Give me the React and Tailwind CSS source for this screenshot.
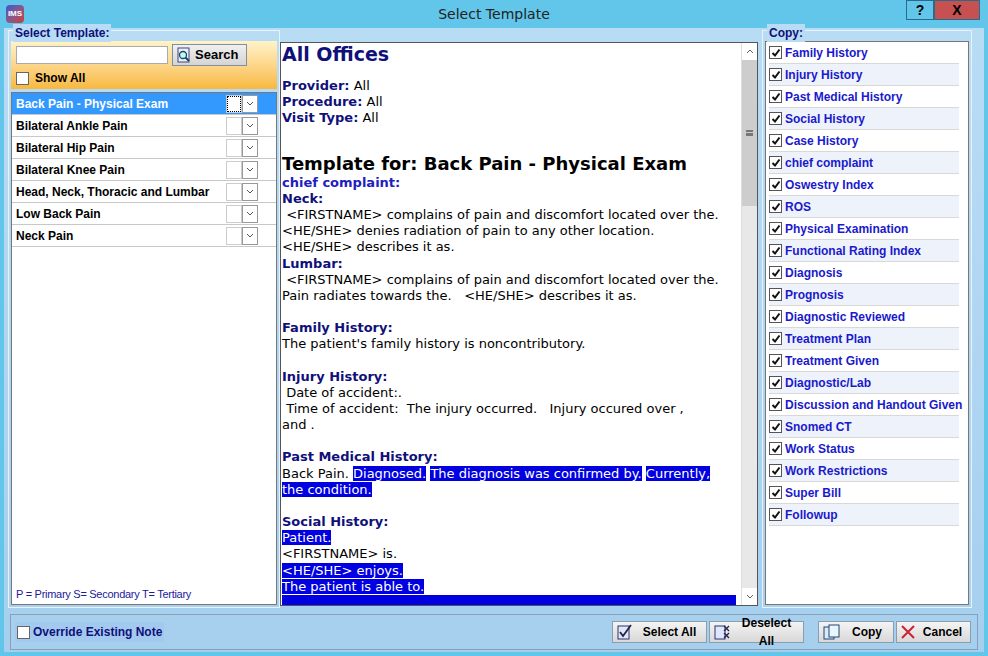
import React from "react";

const templates = ["Back Pain - Physical Exam","Bilateral Ankle Pain","Bilateral Hip Pain","Bilateral Knee Pain","Head, Neck, Thoracic and Lumbar","Low Back Pain","Neck Pain"];
const copies = ["Family History","Injury History","Past Medical History","Social History","Case History","chief complaint","Oswestry Index","ROS","Physical Examination","Functional Rating Index","Diagnosis","Prognosis","Diagnostic Reviewed","Treatment Plan","Treatment Given","Diagnostic/Lab","Discussion and Handout Given","Snomed CT","Work Status","Work Restrictions","Super Bill","Followup"];

const Check = () => (
  <div className="w-[13px] h-[13px] border border-[#555] bg-white flex items-center justify-center shrink-0">
    <svg width="10" height="10" viewBox="0 0 10 10"><path d="M1.5 5 L4 7.5 L8.5 1.5" stroke="#111" strokeWidth="2" fill="none"/></svg>
  </div>
);

const Combo = ({ sel }) => (
  <div className="flex h-[18px] mr-[18px]">
    <div className={`w-[16px] h-[18px] bg-white border border-[#ccc] ${sel ? "outline-1 outline-dotted outline-black -outline-offset-2" : ""}`} />
    <div className="w-[16px] h-[18px] bg-white border border-[#999] flex items-center justify-center">
      <svg width="8" height="5" viewBox="0 0 8 5"><path d="M1 1 L4 4 L7 1" stroke="#555" fill="none"/></svg>
    </div>
  </div>
);

const Hl = ({ children }) => <span className="bg-[#0000e0] text-white">{children}</span>;
const H = ({ children }) => <div className="text-[#10107a] font-bold">{children}</div>;

const Btn = ({ icon, label, w }) => (
  <div className={`h-[22px] ${w} border border-[#8a9cb0] bg-gradient-to-b from-[#f4f4f4] to-[#d8d8d8] flex items-center gap-1 px-1 text-[12px] font-bold`}>
    {icon}<span className="flex-1 text-center">{label}</span>
  </div>
);

export default function App() {
  return (
    <div className="w-[988px] h-[656px] bg-[#62c6ea] flex flex-col overflow-hidden" style={{ fontFamily: "'Liberation Sans', Arial, sans-serif" }}>
      <div className="h-[28px] flex items-center relative shrink-0">
        <div className="ml-[6px] w-[18px] h-[18px] rounded-sm bg-gradient-to-br from-[#3355cc] to-[#cc3333] text-white text-[8px] font-bold flex items-center justify-center">IMS</div>
        <div className="absolute left-0 right-0 text-center text-[15px] text-[#222] pointer-events-none" style={{ fontFamily: "'DejaVu Sans', sans-serif", fontSize: 14 }}>Select Template</div>
        <div className="ml-auto mr-[8px] flex h-[20px] self-start">
          <div className="w-[28px] border border-[#2a6b8a] flex items-center justify-center font-bold text-[14px]">?</div>
          <div className="w-[46px] bg-[#c75050] border border-[#2a6b8a] flex items-center justify-center font-bold text-[14px]">X</div>
        </div>
      </div>
      <div className="flex-1 bg-gradient-to-b from-[#b9dcf5] to-[#a6cfee] mx-[4px] mb-[4px] flex flex-col">
        <div className="flex flex-1 px-[4px] pt-[2px] gap-0">
          {/* left */}
          <div className="w-[272px] border border-[#e8f2fb] flex flex-col relative pt-[10px] px-[2px] pb-[2px]">
            <div className="absolute -top-[7px] left-[4px] px-[2px] bg-[#b9dcf5] text-[#10107a] text-[12px] font-bold">Select Template:</div>
            <div className="h-[48px] bg-gradient-to-b from-[#fff3c8] to-[#f8b83a] px-[5px] pt-[3px]">
              <div className="flex gap-[4px] items-center">
                <div className="w-[152px] h-[18px] bg-white border border-[#aaa]" />
                <div className="w-[75px] h-[22px] border border-[#7f8fa0] bg-gradient-to-b from-[#f0f0f0] to-[#d4d4d4] flex items-center gap-1 px-1 text-[13px] font-bold">
                  <svg width="14" height="16" viewBox="0 0 14 16"><rect x="1" y="1" width="11" height="14" fill="#e8f0ff" stroke="#447"/><circle cx="6" cy="8" r="3.5" fill="#bfe" stroke="#246" strokeWidth="1.3"/><path d="M8.5 10.5 L12 14" stroke="#246" strokeWidth="2"/></svg>
                  Search
                </div>
              </div>
              <div className="flex items-center gap-[6px] mt-[3px] text-[12px] font-bold">
                <div className="w-[13px] h-[13px] bg-white border border-[#666]" />Show All
              </div>
            </div>
            <div className="flex-1 bg-white border border-[#777] mt-[3px] flex flex-col">
              {templates.map((t, i) => (
                <div key={t} className={`h-[22px] flex items-center pl-[4px] border-b border-[#c8c8c8] text-[12px] font-bold ${i === 0 ? "bg-[#3399ff] text-white" : "text-black"}`}>
                  <span className="flex-1">{t}</span><Combo sel={i === 0} />
                </div>
              ))}
              <div className="flex-1" />
              <div className="text-[11px] text-[#1a1a9a] px-[4px] pb-[2px] tracking-tight">P = Primary S= Secondary T= Tertiary</div>
            </div>
          </div>
          {/* middle */}
          <div className="w-[478px] h-[564px] mt-[12px] bg-white border border-[#555] flex">
            <div className="flex-1 overflow-hidden pl-[1px] text-[13px] leading-[16.2px]" style={{ fontFamily: "'DejaVu Sans', Verdana, sans-serif" }}>
              <div className="text-[#10107a] font-bold text-[19px] leading-[22px]">All Offices</div>
              <div className="h-[13px]" />
              <div><span className="text-[#10107a] font-bold">Provider:</span> All</div>
              <div><span className="text-[#10107a] font-bold">Procedure:</span> All</div>
              <div><span className="text-[#10107a] font-bold">Visit Type:</span> All</div>
              <div className="h-[26px]" />
              <div className="font-bold text-[18px] leading-[22px]">Template for: Back Pain - Physical Exam</div>
              <div className="text-[#2020c0] font-bold">chief complaint:</div>
              <H>Neck:</H>
              <div>&nbsp;&lt;FIRSTNAME&gt; complains of pain and discomfort located over the.</div>
              <div>&lt;HE/SHE&gt; denies radiation of pain to any other location.</div>
              <div>&lt;HE/SHE&gt; describes it as.</div>
              <H>Lumbar:</H>
              <div>&nbsp;&lt;FIRSTNAME&gt; complains of pain and discomfort located over the.</div>
              <div>Pain radiates towards the. &nbsp; &lt;HE/SHE&gt; describes it as.</div>
              <div className="h-[16px]" />
              <H>Family History:</H>
              <div>The patient's family history is noncontributory.</div>
              <div className="h-[16px]" />
              <H>Injury History:</H>
              <div>&nbsp;Date of accident:.</div>
              <div>&nbsp;Time of accident: &nbsp;The injury occurred. &nbsp; Injury occured over ,</div>
              <div>and .</div>
              <div className="h-[16px]" />
              <H>Past Medical History:</H>
              <div>Back Pain. <Hl>Diagnosed.</Hl> <Hl>The diagnosis was confirmed by.</Hl> <Hl>Currently,</Hl></div>
              <div><Hl>the condition.</Hl></div>
              <div className="h-[16px]" />
              <H>Social History:</H>
              <div><Hl>Patient.</Hl></div>
              <div>&lt;FIRSTNAME&gt; is.</div>
              <div><Hl>&lt;HE/SHE&gt; enjoys.</Hl></div>
              <div><Hl>The patient is able to.</Hl></div>
              <div className="bg-[#0000e0] h-[16px] w-[454px]" />
            </div>
            <div className="w-[16px] bg-[#e8e8e8] flex flex-col items-center border-l border-[#ddd]">
              <div className="h-[17px] w-full bg-white flex items-center justify-center"><svg width="8" height="5"><path d="M1 4 L4 1 L7 4" stroke="#666" fill="none"/></svg></div>
              <div className="w-full h-[146px] bg-[#cdcdcd] flex items-center justify-center"><div className="w-[7px] h-[6px] border-y-2 border-[#777] flex flex-col justify-center"><div className="h-[1px] bg-[#777]" /></div></div>
              <div className="flex-1" />
              <div className="h-[17px] w-full bg-white flex items-center justify-center"><svg width="8" height="5"><path d="M1 1 L4 4 L7 1" stroke="#666" fill="none"/></svg></div>
            </div>
          </div>
          {/* right */}
          <div className="w-[210px] ml-[4px] border border-[#e8f2fb] relative pt-[10px] px-[2px] pb-[2px] flex flex-col">
            <div className="absolute -top-[7px] left-[4px] px-[2px] bg-[#b9dcf5] text-[#10107a] text-[12px] font-bold">Copy:</div>
            <div className="flex-1 bg-white border border-[#777] flex flex-col pl-[3px]">
              {copies.map((c, i) => (
                <div key={c} className={`h-[22px] flex items-center gap-[3px] border-b border-[#d8d8d8] w-[190px] text-[12px] font-bold text-[#1a1acc] whitespace-nowrap ${i % 2 ? "bg-[#eef2fb]" : "bg-white"}`}>
                  <Check />{c}
                </div>
              ))}
            </div>
          </div>
        </div>
        {/* bottom */}
        <div className="h-[36px] mx-[6px] mt-[6px] mb-[2px] border border-[#8aa0b8] flex items-center pl-[4px] pr-[6px]">
          <div className="flex items-center gap-[3px] bg-[#a3c9ee] h-[20px] pr-[2px] text-[12px] font-bold text-[#10107a]">
            <div className="w-[13px] h-[13px] bg-white border border-[#666] ml-[2px]" />Override Existing Note
          </div>
          <div className="flex-1" />
          <Btn w="w-[95px]" label="Select All" icon={<svg width="16" height="16" viewBox="0 0 16 16"><rect x="1" y="2" width="11" height="13" fill="#dde8ff" stroke="#336"/><path d="M3 8 L6 12 L14 1" stroke="#224" strokeWidth="1.8" fill="none"/></svg>} />
          <div className="w-[2px]" />
          <Btn w="w-[95px]" label="Deselect All" icon={<svg width="16" height="16" viewBox="0 0 16 16"><rect x="1" y="2" width="10" height="13" fill="#dde8ff" stroke="#336"/><path d="M10 2 L15 7 M15 2 L10 7 M10 9 L15 14 M15 9 L10 14" stroke="#224" strokeWidth="1.3"/></svg>} />
          <div className="w-[14px]" />
          <Btn w="w-[76px]" label="Copy" icon={<svg width="18" height="16" viewBox="0 0 18 16"><rect x="1" y="3" width="10" height="12" fill="#d8ecf8" stroke="#247"/><rect x="6" y="1" width="10" height="12" fill="#eaf6ff" stroke="#247"/></svg>} />
          <div className="w-[2px]" />
          <Btn w="w-[75px]" label="Cancel" icon={<svg width="14" height="14" viewBox="0 0 14 14"><path d="M1 1 L13 13 M13 1 L1 13" stroke="#cc2233" strokeWidth="2"/></svg>} />
        </div>
      </div>
    </div>
  );
}
